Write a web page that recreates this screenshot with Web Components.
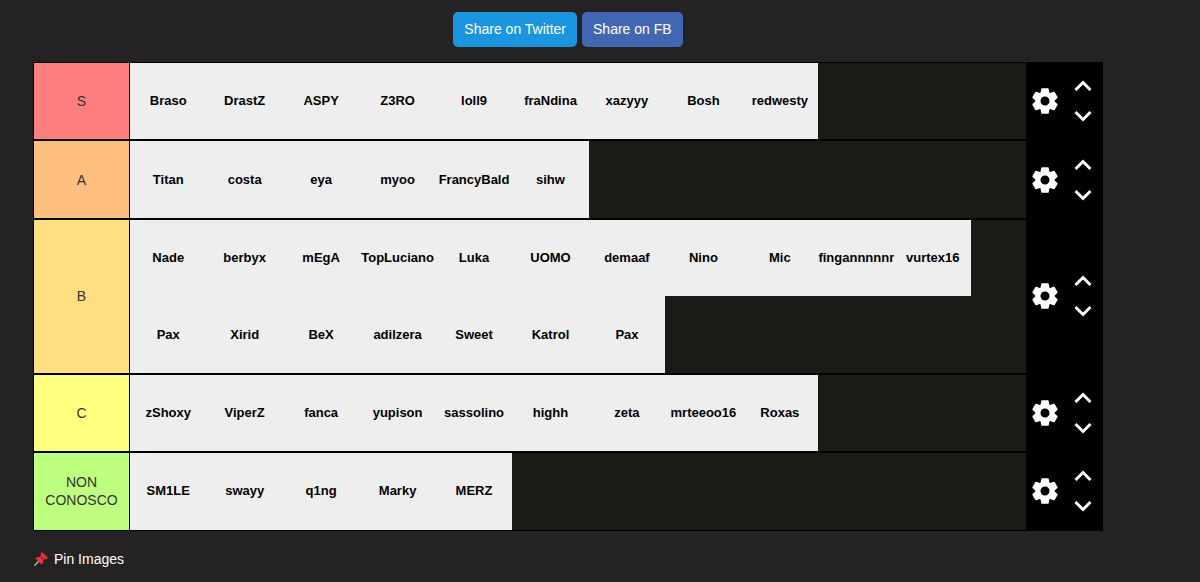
<!DOCTYPE html>
<html lang="en">
<head>
<meta charset="utf-8">
<title>Tier list</title>
<style>
body { margin: 0; background: #242223; color: #fff; font: 14px/20px "Liberation Sans", Arial, sans-serif; }
</style>
</head>
<body>
<tier-page>
  <share-link slot="share" href="#twitter" style="--fill:#1b95e0">Share on Twitter</share-link>
  <share-link slot="share" href="#fb" style="--fill:#4267b2">Share on FB</share-link>
  <tier-row label="S" color="#ff7f7f" names="Braso,DrastZ,ASPY,Z3RO,loll9,fraNdina,xazyyy,Bosh,redwesty"></tier-row>
  <tier-row label="A" color="#ffbf7f" names="Titan,costa,eya,myoo,FrancyBald,sihw"></tier-row>
  <tier-row label="B" color="#ffdf80" names="Nade,berbyx,mEgA,TopLuciano,Luka,UOMO,demaaf,Nino,Mic,fingannnnnr,vurtex16,Pax,Xirid,BeX,adilzera,Sweet,Katrol,Pax"></tier-row>
  <tier-row label="C" color="#feff7f" names="zShoxy,ViperZ,fanca,yupison,sassolino,highh,zeta,mrteeoo16,Roxas"></tier-row>
  <tier-row label="NON CONOSCO" color="#beff7f" names="SM1LE,swayy,q1ng,Marky,MERZ"></tier-row>
  <pin-toggle slot="footer">Pin Images</pin-toggle>
</tier-page>
<script>
class TierPage extends HTMLElement {
  constructor() {
    super();
    this.attachShadow({ mode: 'open' }).innerHTML = `
      <style>
        :host { display: block; padding: 12px 97px 12px 33px; }
        .share { display: flex; justify-content: center; gap: 5px; margin-bottom: 15px; }
        .board { display: flex; flex-direction: column; gap: 2px; background: #000; border: 1px solid #000; }
        footer { margin-top: 18px; }
      </style>
      <div class="share"><slot name="share"></slot></div>
      <main class="board"><slot></slot></main>
      <footer><slot name="footer"></slot></footer>`;
  }
}
class ShareLink extends HTMLElement {
  constructor() {
    super();
    this.attachShadow({ mode: 'open' }).innerHTML = `
      <style>
        :host { display: block; }
        a { display: block; padding: 0 11px; border-radius: 5px; background: var(--fill); color: #fff; font-size: 14px; line-height: 35px; text-decoration: none; white-space: nowrap; }
      </style>
      <a href="${this.getAttribute('href')}"><slot></slot></a>`;
  }
}
class TierTile extends HTMLElement {
  constructor() {
    super();
    this.attachShadow({ mode: 'open' }).innerHTML = `
      <style>
        :host { display: flex; align-items: center; justify-content: center; aspect-ratio: 1; min-width: 0; background: #eee; color: #000; font-size: 13px; font-weight: bold; white-space: nowrap; }
      </style>
      <span><slot></slot></span>`;
  }
}
class TierRow extends HTMLElement {
  constructor() {
    super();
    const label = this.getAttribute('label');
    this.attachShadow({ mode: 'open' }).innerHTML = `
      <style>
        :host { display: grid; grid-template-columns: 95px 1fr 76px; }
        .label { display: flex; align-items: center; justify-content: center; text-align: center; color: #333; font-size: 14px; line-height: 18px; }
        .tiles { display: grid; grid-template-columns: repeat(11, 1fr); align-content: start; margin-left: 1px; padding-right: 55px; background: #1a1a17; }
        .tools { display: grid; grid-template-columns: 38px 38px; align-items: center; }
        .order { display: grid; gap: 6px; }
        button { display: flex; align-items: center; justify-content: center; padding: 0; border: 0; background: none; color: #fff; height: 24px; cursor: pointer; }
        svg { display: block; flex: none; }
      </style>
      <div class="label">${label}</div>
      <div class="tiles">${this.getAttribute('names').split(',').map(n => `<tier-tile>${n}</tier-tile>`).join('')}</div>
      <div class="tools">
        <button aria-label="Settings for ${label}"><svg width="26" height="26" viewBox="-13 -13 26 26" fill="currentColor" stroke="currentColor" stroke-linejoin="round"><circle r="7" fill="none" stroke-width="5"/>${[0, 60, 120, 180, 240, 300].map(a => `<path stroke-width="1.6" transform="rotate(${a})" d="M-3.8 -7.500 -2.900 -12H2.900L3.800 -7.500z"/>`).join('')}</svg></button>
        <div class="order">
          <button aria-label="Move ${label} up"><svg width="18" height="12" viewBox="0 0 18 12" fill="none" stroke="currentColor" stroke-width="3"><path d="M1.5 10 9 2.5 16.5 10"/></svg></button>
          <button aria-label="Move ${label} down"><svg width="18" height="12" viewBox="0 0 18 12" fill="none" stroke="currentColor" stroke-width="3"><path d="M1.5 2 9 9.5 16.5 2"/></svg></button>
        </div>
      </div>`;
    this.shadowRoot.querySelector('.label').style.background = this.getAttribute('color');
  }
}
class PinToggle extends HTMLElement {
  constructor() {
    super();
    this.attachShadow({ mode: 'open' }).innerHTML = `
      <style>
        :host { display: block; }
        button { display: flex; align-items: center; gap: 5px; padding: 0; border: 0; background: none; color: #fff; font: inherit; cursor: pointer; }
      </style>
      <button><svg width="16" height="16" viewBox="0 0 16 16" aria-hidden="true"><path d="M6.500 9.500 1.500 14.500" stroke="#b4bcc4" stroke-width="1.500"/><path d="M9 1.500 14.500 7 13 8 11.500 7.500 9.500 9.500 9.500 12 8.500 13 3 7.500 4 6.500 6.500 6.500 8.500 4.500 8 3z" fill="#e8323f" stroke="#e8323f" stroke-linejoin="round"/><path d="M8.500 5 11 7.500 9.500 9 7 6.500z" fill="#b5233a"/></svg><slot></slot></button>`;
  }
}
customElements.define('tier-tile', TierTile);
customElements.define('tier-row', TierRow);
customElements.define('share-link', ShareLink);
customElements.define('pin-toggle', PinToggle);
customElements.define('tier-page', TierPage);
</script>
</body>
</html>
